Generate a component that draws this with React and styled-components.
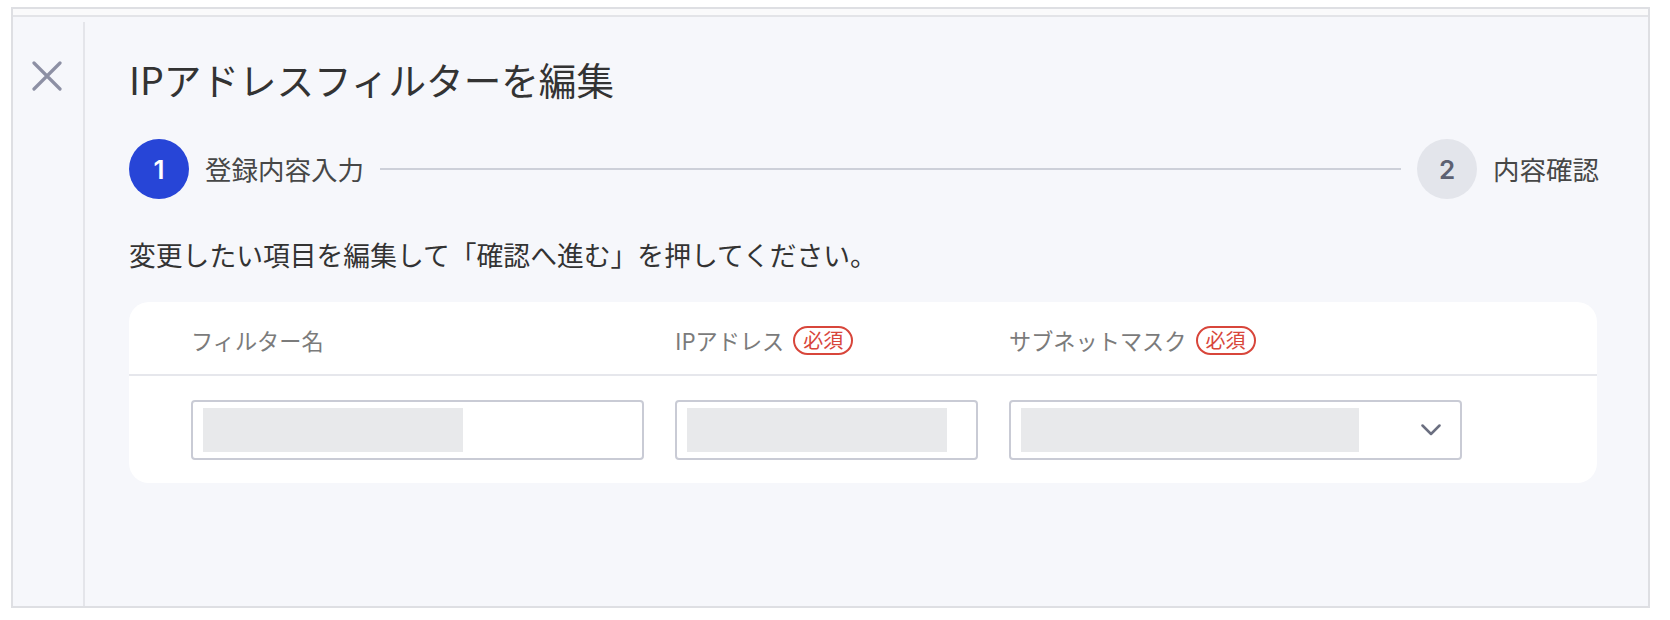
import React from "react";
import styled, { createGlobalStyle } from "styled-components";

const Global = createGlobalStyle`
  html, body { margin: 0; padding: 0; background: #ffffff; }
  body { font-family: "Noto Sans CJK JP", "Noto Sans", sans-serif; color: #333; }
  * { box-sizing: border-box; }
`;

const Frame = styled.div`
  margin: 7px 0 0 11px;
  width: 1639px;
  height: 601px;
  border: 2px solid #dedfe3;
  background: #f6f7fb;
  display: flex;
  flex-direction: column;
`;

const TopStrip = styled.div`
  height: 8px;
  flex: none;
  background: #fafafb;
  border-bottom: 2px solid #e3e4e8;
`;

const Body = styled.div`
  flex: 1;
  display: flex;
  min-height: 0;
`;

const Rail = styled.div`
  width: 72px;
  flex: none;
  margin-top: 5px;
  border-right: 2px solid #e4e5ea;
  padding: 39px 0 0 19px;
`;

const CloseButton = styled.button`
  width: 30px;
  height: 30px;
  padding: 0;
  border: 0;
  background: transparent;
  display: flex;
  align-items: center;
  justify-content: center;
  cursor: pointer;
`;

const Content = styled.div`
  flex: 1;
  padding: 38px 51px 0 44px;
  display: flex;
  flex-direction: column;
`;

const Title = styled.h1`
  margin: 0;
  font-size: 37.6px;
  line-height: 48px;
  font-weight: 400;
  color: #333333;
`;

const Steps = styled.div`
  margin: 36px -2px 0 0;
  display: flex;
  align-items: center;
  gap: 16px;
`;

const StepCircle = styled.div`
  width: 60px;
  height: 60px;
  border-radius: 50%;
  flex: none;
  display: flex;
  align-items: center;
  justify-content: center;
  font-family: "Inter", "Noto Sans", sans-serif;
  font-size: 26px;
  font-weight: 600;
  background: ${(p) => (p.$active ? "#2745d7" : "#e3e5eb")};
  color: ${(p) => (p.$active ? "#ffffff" : "#5d6172")};
`;

const StepLabel = styled.span`
  font-size: 26.5px;
  line-height: 36px;
  color: #474747;
  white-space: nowrap;
`;

const StepLine = styled.div`
  flex: 1;
  height: 2px;
  background: #cdd0d9;
`;

const Instruction = styled.p`
  margin: 36px 0 0;
  font-size: 26.8px;
  line-height: 39px;
  color: #333333;
`;

const Card = styled.div`
  margin-top: 28px;
  background: #ffffff;
  border-radius: 20px;
  overflow: hidden;
`;

const Grid = styled.div`
  display: grid;
  grid-template-columns: 453px 303px 453px;
  column-gap: 31px;
  padding: 0 0 0 62px;
`;

const HeaderRow = styled(Grid)`
  height: 74px;
  padding-top: 4px;
  align-items: center;
  border-bottom: 2px solid #e6e7ec;
`;

const BodyRow = styled(Grid)`
  padding-top: 24px;
  padding-bottom: 23px;
`;

const HeadLabel = styled.div`
  display: flex;
  align-items: center;
  gap: 9px;
  font-size: 22.2px;
  line-height: 30px;
  color: #7b7b7b;
  white-space: nowrap;
`;

const Required = styled.span`
  display: inline-flex;
  align-items: center;
  justify-content: center;
  height: 29px;
  padding: 0 8px;
  border: 2px solid #d8463b;
  border-radius: 15px;
  color: #d8463b;
  font-size: 20px;
  line-height: 1;
`;

const Field = styled.div`
  height: 60px;
  border: 2px solid #c9cbd5;
  border-radius: 4px;
  background: #ffffff;
  padding: 6px 19px 6px 10px;
  display: flex;
  align-items: center;
  justify-content: space-between;
`;

const Placeholder = styled.div`
  height: 44px;
  width: ${(p) => p.$w}px;
  background: #e8e9eb;
`;

const XIcon = () => (
  <svg width="30" height="30" viewBox="0 0 30 30" fill="none">
    <path d="M2 2 L28 28 M28 2 L2 28" stroke="#8d90a4" strokeWidth="3.2" strokeLinecap="round" />
  </svg>
);

const Chevron = () => (
  <svg width="20" height="12" viewBox="0 0 20 12" fill="none">
    <path d="M1.5 1.5 L10 10 L18.5 1.5" stroke="#6b6f80" strokeWidth="2.5" strokeLinecap="round" strokeLinejoin="round" />
  </svg>
);

export default function App() {
  return (
    <>
      <Global />
      <Frame>
        <TopStrip />
        <Body>
          <Rail>
            <CloseButton aria-label="閉じる">
              <XIcon />
            </CloseButton>
          </Rail>
          <Content>
            <Title>IPアドレスフィルターを編集</Title>
            <Steps>
              <StepCircle $active>1</StepCircle>
              <StepLabel>登録内容入力</StepLabel>
              <StepLine />
              <StepCircle>2</StepCircle>
              <StepLabel>内容確認</StepLabel>
            </Steps>
            <Instruction>変更したい項目を編集して「確認へ進む」を押してください。</Instruction>
            <Card>
              <HeaderRow>
                <HeadLabel>フィルター名</HeadLabel>
                <HeadLabel>
                  IPアドレス<Required>必須</Required>
                </HeadLabel>
                <HeadLabel>
                  サブネットマスク<Required>必須</Required>
                </HeadLabel>
              </HeaderRow>
              <BodyRow>
                <Field>
                  <Placeholder $w={260} />
                </Field>
                <Field>
                  <Placeholder $w={260} />
                </Field>
                <Field>
                  <Placeholder $w={338} />
                  <Chevron />
                </Field>
              </BodyRow>
            </Card>
          </Content>
        </Body>
      </Frame>
    </>
  );
}
